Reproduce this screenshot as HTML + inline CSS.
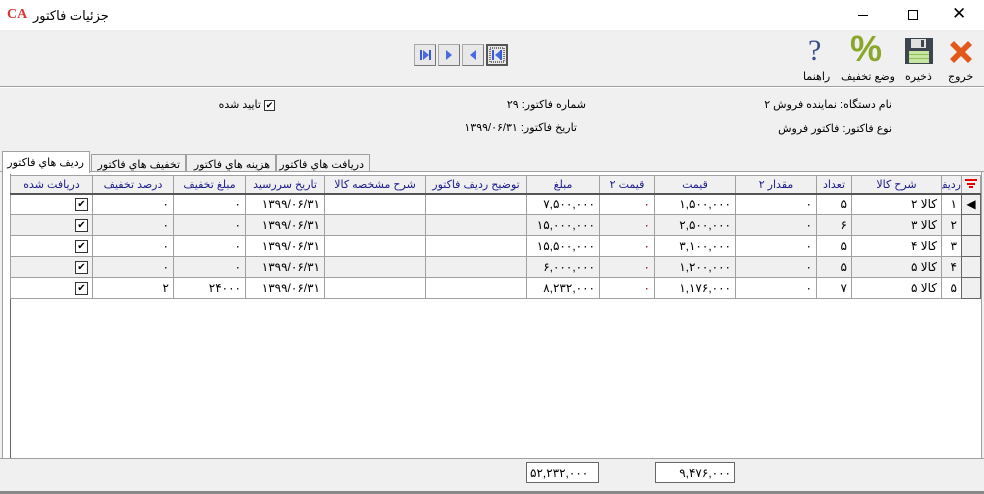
<!DOCTYPE html>
<html><head><meta charset="utf-8"><style>
*{margin:0;padding:0;box-sizing:border-box}
body{width:984px;height:494px;background:#f0f0f0;font-family:"Liberation Sans","DejaVu Sans",sans-serif;font-size:11px;color:#000;position:relative;overflow:hidden}
.a{position:absolute}
.t{white-space:nowrap;direction:rtl}
table{border-collapse:collapse;table-layout:fixed;position:absolute;left:10px;top:175px;direction:rtl;width:970px}
td{border:1px solid #a0a0a0;height:21px;padding:0 4px;white-space:nowrap;overflow:hidden;text-align:right;font-size:12px}
th{height:18px;border:1px solid #a0a0a0;border-bottom:2px solid #555;font-weight:normal;color:#1a1a8c;font-size:11px;background:#f0f0f0;text-align:center;overflow:hidden;white-space:nowrap}
tr.g td{background:#f0f0f0}
tr.w td{background:#fff}
.r{color:#a00}
.cb{display:inline-block;width:13px;height:13px;border:1px solid #333;background:#fff;font-size:10px;line-height:11px;text-align:center;vertical-align:middle}
td.ind{background:#f0f0f0 !important;border:1px solid #666;padding:0}
.nb{position:absolute;top:44px;width:22px;height:22px;background:#e8e8e8;border:1px solid #aaa;border-bottom-color:#777;border-right-color:#777}
</style></head><body>
<div class="a" style="left:0;top:0;width:984px;height:30px;background:#fff"></div>
<div class="a" style="left:7px;top:7px;color:#d33;font:bold 14px 'Liberation Serif',serif">CA</div>
<div class="a t" style="left:33px;top:8px;font-size:13px">جزئیات فاکتور</div>
<div class="a" style="left:858px;top:15px;width:10px;height:1px;background:#000"></div>
<div class="a" style="left:908px;top:10px;width:10px;height:10px;border:1px solid #000"></div>
<div class="a" style="left:952px;top:4px;font-size:17px">✕</div>

<div class="nb" style="left:414px"><svg width="20" height="20"><rect x="5" y="5" width="2" height="10" fill="#3b5bd6"/><polygon points="8,5 14,10 8,15" fill="#4a6ae0"/><rect x="14" y="5" width="2" height="10" fill="#3b5bd6"/></svg></div>
<div class="nb" style="left:438px"><svg width="20" height="20"><polygon points="7,5 13,10 7,15" fill="#4a6ae0"/></svg></div>
<div class="nb" style="left:462px"><svg width="20" height="20"><polygon points="13,5 7,10 13,15" fill="#4a6ae0"/></svg></div>
<div class="nb" style="left:486px;border:2px solid #555"><svg width="18" height="18"><rect x="2" y="2" width="14" height="14" fill="none" stroke="#000" stroke-dasharray="1,1"/><rect x="4" y="4" width="2" height="10" fill="#3b5bd6"/><polygon points="13,4 7,9 13,14" fill="#4a6ae0"/><rect x="12" y="4" width="2" height="10" fill="#3b5bd6"/></svg></div>

<svg class="a" style="left:945px;top:36px" width="32" height="32"><path d="M5 9 L9 5 L16 12 L23 5 L27 9 L20 16 L27 23 L23 27 L16 20 L9 27 L5 23 L12 16Z" fill="#e2571a"/></svg>
<div class="a t" style="left:948px;top:70px">خروج</div>
<svg class="a" style="left:903px;top:36px" width="32" height="30"><rect x="2" y="2" width="28" height="26" fill="#3c4550"/><rect x="8" y="3" width="15" height="9" fill="#e0e0e0"/><rect x="18" y="4" width="3" height="7" fill="#3c4550"/><rect x="6" y="15" width="20" height="12" fill="#c8e6a0"/><rect x="6" y="18" width="20" height="1" fill="#8fbf60"/><rect x="6" y="22" width="20" height="1" fill="#8fbf60"/></svg>
<div class="a t" style="left:905px;top:70px">ذخیره</div>
<div class="a" style="left:850px;top:28px;color:#8aa72b;font:bold 36px 'Liberation Sans',sans-serif">%</div>
<div class="a t" style="left:841px;top:70px">وضع تخفیف</div>
<div class="a" style="left:808px;top:34px;color:#3a4e8c;font:30px 'Liberation Serif',serif">?</div>
<div class="a t" style="left:803px;top:70px">راهنما</div>
<div class="a" style="left:0;top:86px;width:984px;height:1px;background:#a0a0a0"></div>
<div class="a" style="left:0;top:87px;width:984px;height:1px;background:#fff"></div>

<div class="a t" style="right:92px;top:98px">نام دستگاه: نماینده فروش ۲</div>
<div class="a t" style="right:92px;top:122px">نوع فاکتور: فاکتور فروش</div>
<div class="a t" style="right:398px;top:98px">شماره فاکتور: ۲۹</div>
<div class="a t" style="right:407px;top:121px">تاریخ فاکتور: ۱۳۹۹/۰۶/۳۱</div>
<div class="a t" style="right:709px;top:98px"><span class="cb" style="width:11px;height:11px;line-height:9px;font-size:9px">✔</span> تایید شده</div>

<div class="a" style="left:0;top:171px;width:984px;height:1px;background:#a0a0a0"></div>
<div class="a t" style="left:276px;top:154px;width:94px;height:18px;border:1px solid #a0a0a0;border-bottom:none;padding:3px 5px">دریافت هاي فاکتور</div>
<div class="a t" style="left:186px;top:154px;width:90px;height:18px;border:1px solid #a0a0a0;border-bottom:none;padding:3px 5px">هزینه هاي فاکتور</div>
<div class="a t" style="left:91px;top:154px;width:95px;height:18px;border:1px solid #a0a0a0;border-bottom:none;padding:3px 5px">تخفیف هاي فاکتور</div>
<div class="a t" style="left:2px;top:151px;width:88px;height:22px;border:1px solid #a0a0a0;border-bottom:none;background:#fff;padding:4px 5px;z-index:2">ردیف هاي فاکتور</div>
<div class="a" style="left:2px;top:172px;width:980px;height:287px;background:#fff;border-left:1px solid #a0a0a0;border-right:1px solid #a0a0a0"></div>
<div class="a" style="left:10px;top:174px;width:1px;height:285px;background:#666"></div>

<table>
<colgroup><col style="width:19px"><col style="width:20px"><col style="width:90px"><col style="width:35px"><col style="width:81px"><col style="width:81px"><col style="width:55px"><col style="width:73px"><col style="width:101px"><col style="width:101px"><col style="width:79px"><col style="width:72px"><col style="width:81px"><col style="width:82px"></colgroup>
<tr><th><svg width="12" height="10"><rect x="0" y="1" width="12" height="2" fill="#e00"/><rect x="2" y="5" width="8" height="2" fill="#e00"/><rect x="4" y="8" width="4" height="2" fill="#e00"/></svg></th><th>ردیف</th><th>شرح کالا</th><th>تعداد</th><th>مقدار ۲</th><th>قیمت</th><th>قیمت ۲</th><th>مبلغ</th><th>توضیح ردیف فاکتور</th><th>شرح مشخصه کالا</th><th>تاریخ سررسید</th><th>مبلغ تخفیف</th><th>درصد تخفیف</th><th>دریافت شده</th></tr>
<tr class="w"><td class="ind" style="text-align:center">◀</td><td>۱</td><td>کالا ۲</td><td>۵</td><td>۰</td><td>۱,۵۰۰,۰۰۰</td><td class="r">۰</td><td>۷,۵۰۰,۰۰۰</td><td></td><td></td><td>۱۳۹۹/۰۶/۳۱</td><td>۰</td><td>۰</td><td><span class="cb">✔</span></td></tr>
<tr class="g"><td class="ind"></td><td>۲</td><td>کالا ۳</td><td>۶</td><td>۰</td><td>۲,۵۰۰,۰۰۰</td><td class="r">۰</td><td>۱۵,۰۰۰,۰۰۰</td><td></td><td></td><td>۱۳۹۹/۰۶/۳۱</td><td>۰</td><td>۰</td><td><span class="cb">✔</span></td></tr>
<tr class="w"><td class="ind"></td><td>۳</td><td>کالا ۴</td><td>۵</td><td>۰</td><td>۳,۱۰۰,۰۰۰</td><td class="r">۰</td><td>۱۵,۵۰۰,۰۰۰</td><td></td><td></td><td>۱۳۹۹/۰۶/۳۱</td><td>۰</td><td>۰</td><td><span class="cb">✔</span></td></tr>
<tr class="g"><td class="ind"></td><td>۴</td><td>کالا ۵</td><td>۵</td><td>۰</td><td>۱,۲۰۰,۰۰۰</td><td class="r">۰</td><td>۶,۰۰۰,۰۰۰</td><td></td><td></td><td>۱۳۹۹/۰۶/۳۱</td><td>۰</td><td>۰</td><td><span class="cb">✔</span></td></tr>
<tr class="w"><td class="ind"></td><td>۵</td><td>کالا ۵</td><td>۷</td><td>۰</td><td>۱,۱۷۶,۰۰۰</td><td class="r">۰</td><td>۸,۲۳۲,۰۰۰</td><td></td><td></td><td>۱۳۹۹/۰۶/۳۱</td><td>۲۴۰۰۰</td><td>۲</td><td><span class="cb">✔</span></td></tr>
</table>

<div class="a" style="left:0;top:458px;width:984px;height:1px;background:#a0a0a0"></div>
<div class="a" style="left:526px;top:462px;width:73px;height:21px;border:1px solid #666;background:#fff;padding:3px 3px;font-size:12px">۵۲,۲۳۲,۰۰۰</div>
<div class="a" style="left:655px;top:462px;width:80px;height:21px;border:1px solid #666;background:#fff;padding:3px 3px;font-size:12px;text-align:right">۹,۴۷۶,۰۰۰</div>
<div class="a" style="left:0;top:491px;width:984px;height:3px;background:#888"></div>
</body></html>
